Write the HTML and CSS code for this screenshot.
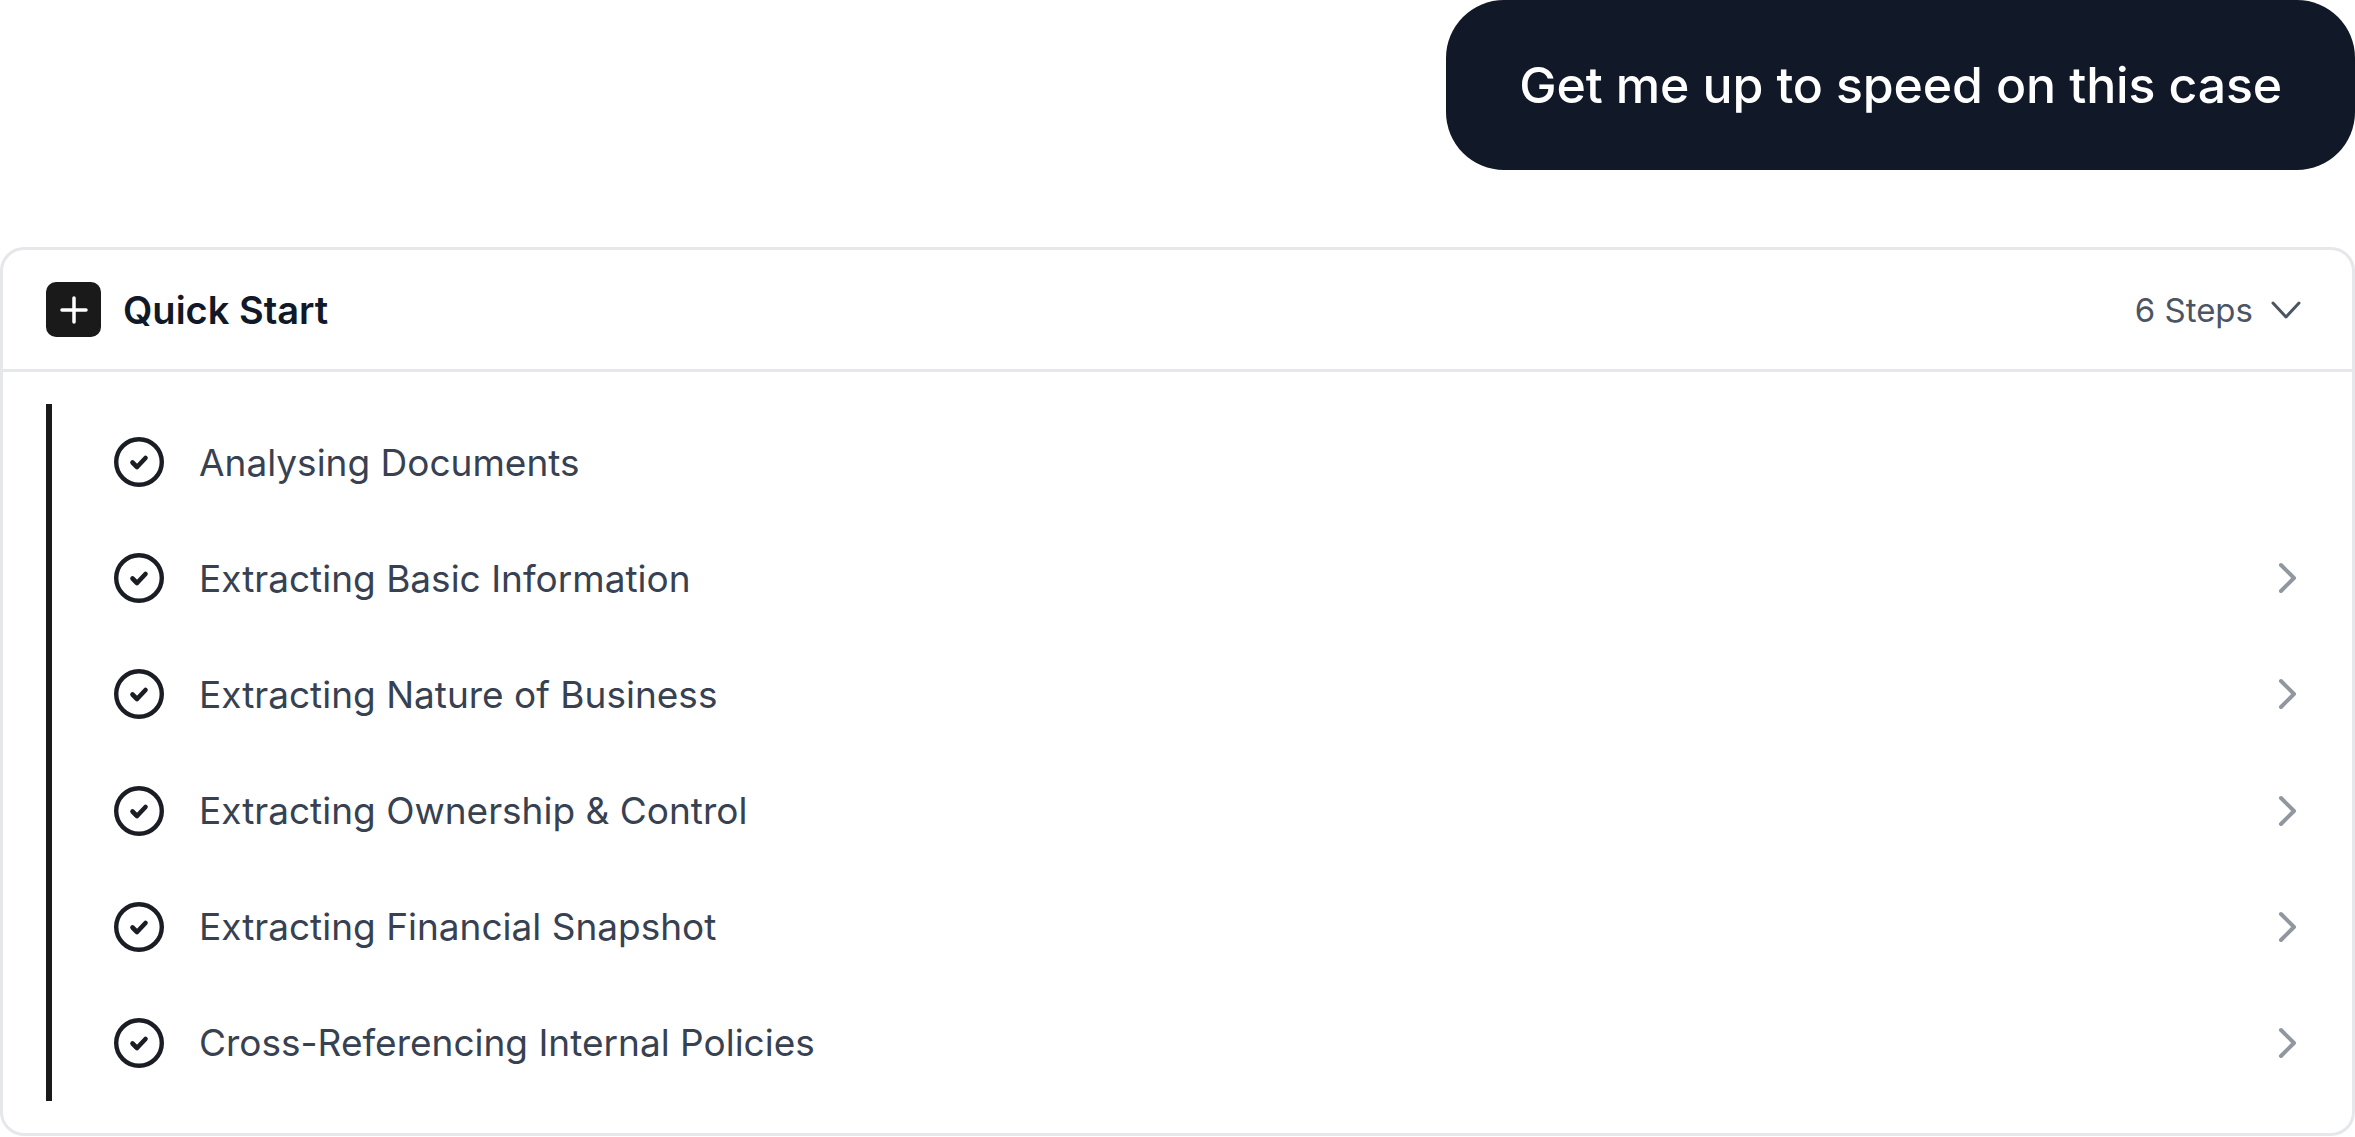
FILE: index.html
```html
<!DOCTYPE html>
<html lang="en">
<head>
    <meta charset="UTF-8">
    <title>Quick Start</title>
    <link rel="stylesheet" href="styles.css">
</head>
<body>

<div class="bubble-row">
    <div class="bubble">Get me up to speed on this case</div>
</div>

<div class="card">
    <div class="card-header">
        <div class="title-wrap">
            <span class="plus-box">
                <svg width="30" height="30" viewBox="0 0 30 30" fill="none" stroke="#fff" stroke-width="3.500" stroke-linecap="round"><path d="M15 3v24M3 15h24"/></svg>
            </span>
            <span class="title">Quick Start</span>
        </div>
        <div class="steps">
            <span>6 Steps</span>
            <svg width="32" height="20" viewBox="0 0 32 20" fill="none" stroke="#4b5563" stroke-width="3" stroke-linecap="round" stroke-linejoin="round"><path d="M3 3l13 14L29 3"/></svg>
        </div>
    </div>

    <div class="card-body">
        <div class="step-list">
            <div class="step">
                <svg class="check" width="52" height="52" viewBox="0 0 52 52" fill="none" stroke="#1a1d23" stroke-linecap="round" stroke-linejoin="round"><circle cx="26" cy="26" r="22.800" stroke-width="4.400"/><path d="M19.500 26.500l4.500 4.500L32.500 22" stroke-width="4.600"/></svg>
                <span class="step-name">Analysing Documents</span>
            </div>
            <div class="step">
                <svg class="check" width="52" height="52" viewBox="0 0 52 52" fill="none" stroke="#1a1d23" stroke-linecap="round" stroke-linejoin="round"><circle cx="26" cy="26" r="22.800" stroke-width="4.400"/><path d="M19.500 26.500l4.500 4.500L32.500 22" stroke-width="4.600"/></svg>
                <span class="step-name">Extracting Basic Information</span>
                <svg class="arrow" width="20" height="32" viewBox="0 0 20 32" fill="none" stroke="#9097a1" stroke-width="4" stroke-linecap="round" stroke-linejoin="round"><path d="M3 3l13 13L3 29"/></svg>
            </div>
            <div class="step">
                <svg class="check" width="52" height="52" viewBox="0 0 52 52" fill="none" stroke="#1a1d23" stroke-linecap="round" stroke-linejoin="round"><circle cx="26" cy="26" r="22.800" stroke-width="4.400"/><path d="M19.500 26.500l4.500 4.500L32.500 22" stroke-width="4.600"/></svg>
                <span class="step-name">Extracting Nature of Business</span>
                <svg class="arrow" width="20" height="32" viewBox="0 0 20 32" fill="none" stroke="#9097a1" stroke-width="4" stroke-linecap="round" stroke-linejoin="round"><path d="M3 3l13 13L3 29"/></svg>
            </div>
            <div class="step">
                <svg class="check" width="52" height="52" viewBox="0 0 52 52" fill="none" stroke="#1a1d23" stroke-linecap="round" stroke-linejoin="round"><circle cx="26" cy="26" r="22.800" stroke-width="4.400"/><path d="M19.500 26.500l4.500 4.500L32.500 22" stroke-width="4.600"/></svg>
                <span class="step-name">Extracting Ownership &amp; Control</span>
                <svg class="arrow" width="20" height="32" viewBox="0 0 20 32" fill="none" stroke="#9097a1" stroke-width="4" stroke-linecap="round" stroke-linejoin="round"><path d="M3 3l13 13L3 29"/></svg>
            </div>
            <div class="step">
                <svg class="check" width="52" height="52" viewBox="0 0 52 52" fill="none" stroke="#1a1d23" stroke-linecap="round" stroke-linejoin="round"><circle cx="26" cy="26" r="22.800" stroke-width="4.400"/><path d="M19.500 26.500l4.500 4.500L32.500 22" stroke-width="4.600"/></svg>
                <span class="step-name">Extracting Financial Snapshot</span>
                <svg class="arrow" width="20" height="32" viewBox="0 0 20 32" fill="none" stroke="#9097a1" stroke-width="4" stroke-linecap="round" stroke-linejoin="round"><path d="M3 3l13 13L3 29"/></svg>
            </div>
            <div class="step">
                <svg class="check" width="52" height="52" viewBox="0 0 52 52" fill="none" stroke="#1a1d23" stroke-linecap="round" stroke-linejoin="round"><circle cx="26" cy="26" r="22.800" stroke-width="4.400"/><path d="M19.500 26.500l4.500 4.500L32.500 22" stroke-width="4.600"/></svg>
                <span class="step-name">Cross-Referencing Internal Policies</span>
                <svg class="arrow" width="20" height="32" viewBox="0 0 20 32" fill="none" stroke="#9097a1" stroke-width="4" stroke-linecap="round" stroke-linejoin="round"><path d="M3 3l13 13L3 29"/></svg>
            </div>
        </div>
    </div>
</div>

</body>
</html>
```

FILE: styles.css
```css
body {
    font-family: Inter, "Liberation Sans", sans-serif;
    background: #fff;
    margin: 0;
    padding: 0;
    height: 1137px;
    overflow: hidden;
}

.bubble-row {
    display: flex;
    justify-content: flex-end;
    margin-bottom: 77px;
}

.bubble {
    background-color: #111827;
    color: #fff;
    font-size: 50px;
    font-weight: 500;
    letter-spacing: -0.14px;
    line-height: 170px;
    height: 170px;
    padding: 0 73px;
    border-radius: 58px;
    white-space: nowrap;
}

.card {
    height: 889px;
    box-sizing: border-box;
    border: 3px solid #e5e7eb;
    border-radius: 24px;
}

.card-header {
    height: 122px;
    box-sizing: border-box;
    border-bottom: 3px solid #e5e7eb;
    display: flex;
    align-items: center;
    justify-content: space-between;
    padding: 0 50px 0 43px;
}

.title-wrap {
    display: flex;
    align-items: center;
    gap: 22px;
}

.plus-box {
    width: 55px;
    height: 55px;
    background-color: #1a1a1a;
    border-radius: 10px;
    display: flex;
    align-items: center;
    justify-content: center;
}

.title {
    font-size: 38px;
    font-weight: 600;
    color: #111827;
}

.steps {
    display: flex;
    align-items: center;
    gap: 17px;
    font-size: 33px;
    color: #4b5563;
}

.card-body {
    padding: 32px 43px;
}

.step-list {
    border-left: 6px solid #1a1a1a;
    height: 697px;
    display: flex;
    flex-direction: column;
    justify-content: space-around;
    padding: 0 11px 0 61px;
}

.step {
    display: flex;
    align-items: center;
    gap: 34px;
    height: 116px;
}

.check {
    flex-shrink: 0;
}

.step-name {
    font-size: 37px;
    color: #374151;
}

.arrow {
    margin-left: auto;
}
```
